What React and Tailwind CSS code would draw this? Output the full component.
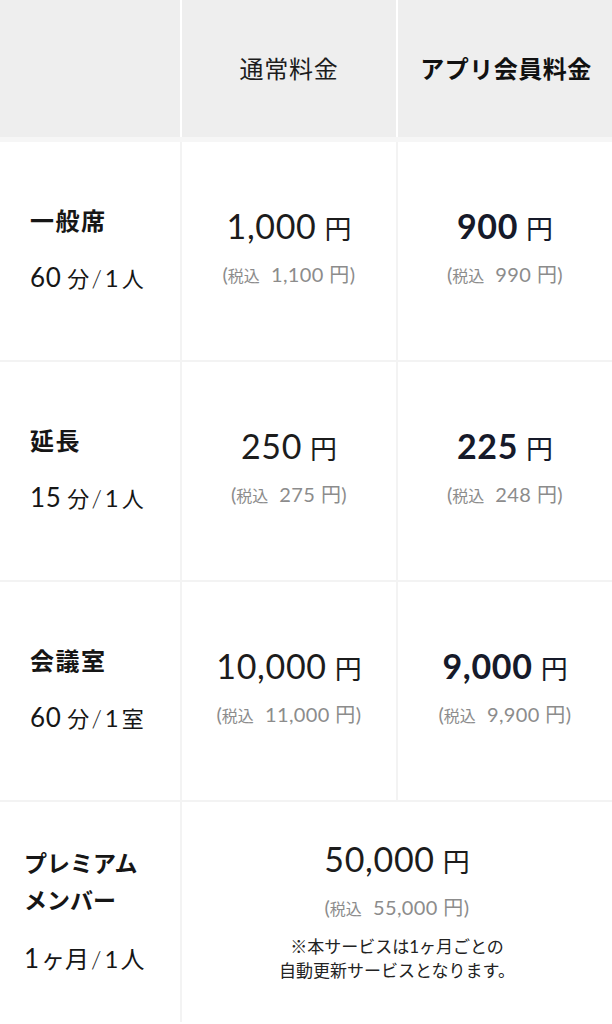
import React from "react";

const F = "font-['Lato','Noto_Sans_CJK_JP',sans-serif]";

function Label({ title, num, unit }) {
  return (
    <div className="flex h-full flex-col justify-center pl-[30px] text-[#161616]">
      <div className="text-[24px] font-bold leading-[30px] tracking-[0.06em]">{title}</div>
      <div className="mt-[26px] leading-[30px]">
        <span className="text-[26px] tracking-[0.03em]">{num}</span>
        <span className="text-[22px]"> 分</span>
        <span className="text-[24px] font-light ml-[2px] mr-[3px]">/</span>
        <span className="text-[24px] mr-[3px]">1</span>
        <span className="text-[22px]">{unit}</span>
      </div>
    </div>
  );
}

function Tax({ tax }) {
  return (
    <div className="mt-[9px] leading-[24px] text-[#8c8c8c]">
      <span className="text-[20px]">(</span>
      <span className="text-[16px]">税込</span>
      <span className="text-[20px] tracking-[0.02em]">&nbsp;&nbsp;{tax} 円)</span>
    </div>
  );
}

function Price({ price, tax, bold }) {
  return (
    <div className="flex h-full flex-col items-center justify-center pb-[8px]">
      <div className={"leading-[40px] " + (bold ? "text-[#161a2a]" : "text-[#1c1c1c]")}>
        <span className={"text-[34px] tracking-[0.02em] " + (bold ? "font-bold" : "font-normal")}>{price}</span>
        <span className="text-[27px] font-normal ml-[8px]">円</span>
      </div>
      <Tax tax={tax} />
    </div>
  );
}

export default function App() {
  const rows = [
    { title: "一般席", num: "60", unit: "人", p1: "1,000", t1: "1,100", p2: "900", t2: "990" },
    { title: "延長", num: "15", unit: "人", p1: "250", t1: "275", p2: "225", t2: "248" },
    { title: "会議室", num: "60", unit: "室", p1: "10,000", t1: "11,000", p2: "9,000", t2: "9,900" },
  ];
  return (
    <div className={F + " w-[612px] h-[1024px] overflow-hidden bg-white"}>
      <div className="grid h-[137px] grid-cols-[180px_214px_216px] gap-x-[2px] bg-white">
        <div className="bg-[#eeeeee]" />
        <div className="flex items-center justify-center bg-[#eeeeee] text-[24px] text-[#1c1c1c] tracking-[0.03em]">
          通常料金
        </div>
        <div className="flex items-center justify-center bg-[#eeeeee] text-[24px] font-bold text-[#111] tracking-[0.02em]">
          アプリ会員料金
        </div>
      </div>
      <div className="h-[5px] bg-[#f6f6f6]" />
      <div className="grid grid-cols-[180px_214px_214px] gap-[2px] bg-[#f3f3f3]">
        {rows.map((r) => (
          <React.Fragment key={r.title}>
            <div className="h-[218px] bg-white">
              <Label title={r.title} num={r.num} unit={r.unit} />
            </div>
            <div className="h-[218px] bg-white">
              <Price price={r.p1} tax={r.t1} />
            </div>
            <div className="h-[218px] bg-white">
              <Price price={r.p2} tax={r.t2} bold />
            </div>
          </React.Fragment>
        ))}
        <div className="h-[220px] bg-white">
          <div className="flex h-full flex-col justify-center pl-[24px] text-[#161616]">
            <div className="text-[23px] font-bold leading-[37px]">
              プレミアム
              <br />
              メンバー
            </div>
            <div className="mt-[22px] leading-[34px]">
              <span className="text-[26px]">1</span>
              <span className="text-[24px] ml-[2px]">ヶ月</span>
              <span className="text-[24px] font-light ml-[2px] mr-[3px]">/</span>
              <span className="text-[24px] mr-[2px]">1</span>
              <span className="text-[24px]">人</span>
            </div>
          </div>
        </div>
        <div className="col-span-2 h-[220px] bg-white">
          <div className="flex h-full flex-col items-center justify-center pb-[2px]">
            <div className="leading-[40px] text-[#1c1c1c]">
              <span className="text-[34px] tracking-[0.02em]">50,000</span>
              <span className="text-[27px] ml-[8px]">円</span>
            </div>
            <Tax tax="55,000" />
            <div className="mt-[14px] text-center text-[17px] leading-[24px] text-[#222]">
              ※本サービスは1ヶ月ごとの
              <br />
              自動更新サービスとなります。
            </div>
          </div>
        </div>
      </div>
    </div>
  );
}
